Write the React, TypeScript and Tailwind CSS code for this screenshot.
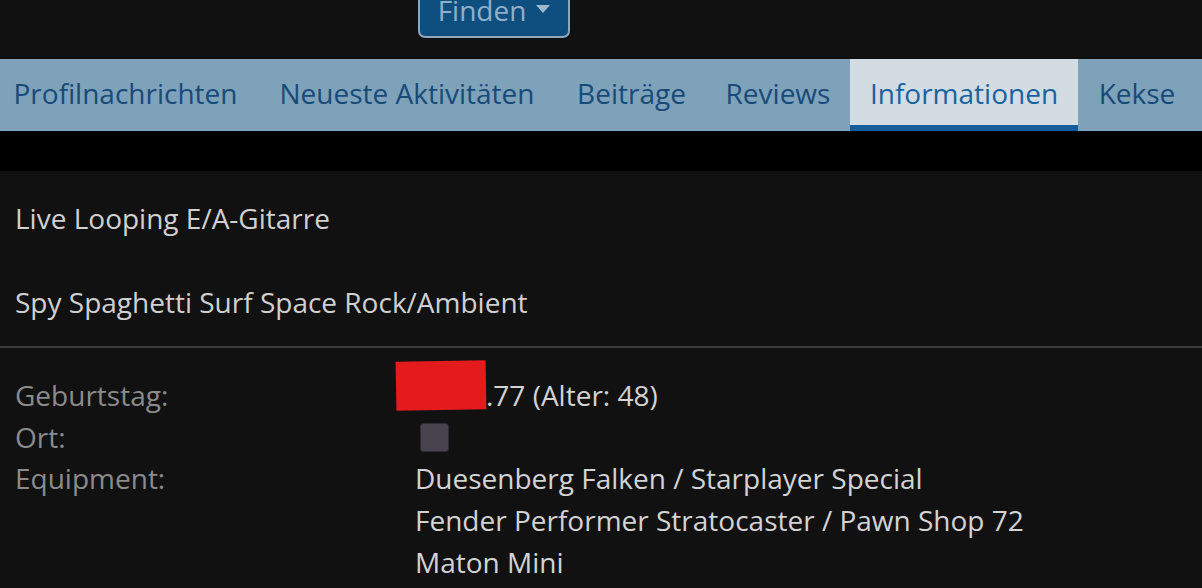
import React from 'react'

const tabs = [
  { label: 'Profilnachrichten', w: 'w-[263px]' },
  { label: 'Neueste Aktivitäten', w: 'w-[300px]' },
  { label: 'Beiträge', w: 'w-[149px]' },
  { label: 'Reviews', w: 'w-[144px]' },
  { label: 'Informationen', w: 'w-[228px]', active: true },
  { label: 'Kekse', w: 'w-[118px]' },
]

export default function App() {
  return (
    <div className="w-[1202px] h-[588px] overflow-hidden bg-[#111111] text-[28px] leading-[42px] font-['Segoe_UI','Open_Sans','Liberation_Sans',sans-serif]">
      {/* top bar with search button */}
      <div className="h-[59px] relative">
        <button className="absolute left-[418px] top-[-18px] w-[152px] h-[56px] rounded-[7px] border-2 border-[#8ea7bd] bg-[#0f4f80] text-[#8fb0cb] flex items-center justify-center gap-[10px]">
          <span>Finden</span>
          <span className="w-0 h-0 border-l-[7px] border-r-[7px] border-t-[8px] border-l-transparent border-r-transparent border-t-[#9db7cc] mt-[-2px]" />
        </button>
      </div>

      {/* tab bar */}
      <div className="h-[72px] bg-[#7fa2bb] flex ml-[-6px]">
        {tabs.map(t => (
          <div
            key={t.label}
            className={`${t.w} shrink-0 flex items-center justify-center whitespace-nowrap ${t.active ? 'bg-[#d4dce3] text-[#1a629e] border-b-[6px] border-[#145e9b] pt-[2px]' : 'text-[#184a78] pb-[4px]'}`}
          >
            {t.label}
          </div>
        ))}
      </div>

      <div className="h-[40px] bg-black" />

      {/* about */}
      <div className="pt-[26px] px-[15px] text-[#d0d0d0]">
        <p>Live Looping E/A-Gitarre</p>
        <p className="mt-[42px]">Spy Spaghetti Surf Space Rock/Ambient</p>
      </div>

      <div className="mt-[23px] h-[2px] bg-[#3b3b3b]" />

      {/* info list */}
      <dl className="mt-[27px] pl-[15px] grid grid-cols-[400px_1fr] leading-[41.7px]">
        <dt className="text-[#8b8b8b]">Geburtstag:</dt>
        <dd className="text-[#d3d3d3] relative">
          <span className="inline-block w-[71px]" />.77 (Alter: 48)
          <span className="absolute left-[-19px] top-[-14px] w-[90px] h-[49px] bg-[#e41b1c] -rotate-1" />
        </dd>
        <dt className="text-[#8b8b8b]">Ort:</dt>
        <dd className="flex items-center">
          <span className="ml-[5px] w-[29px] h-[29px] rounded-[3px] bg-[#48444f] border border-[#2e2b33]" />
        </dd>
        <dt className="text-[#8b8b8b]">Equipment:</dt>
        <dd className="text-[#d3d3d3]">
          Duesenberg Falken / Starplayer Special<br />
          Fender Performer Stratocaster / Pawn Shop 72<br />
          Maton Mini
        </dd>
      </dl>
    </div>
  )
}
